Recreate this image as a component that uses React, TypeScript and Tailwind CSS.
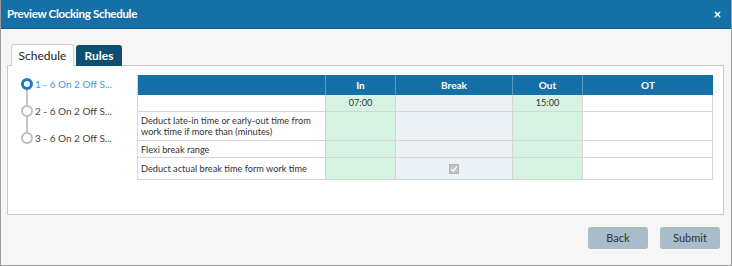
import { X } from 'lucide-react'

const FONT = "font-['Lato','Liberation_Sans',sans-serif]"

const STEPS = ['1 - 6 On 2 Off S...', '2 - 6 On 2 Off S...', '3 - 6 On 2 Off S...']

function Steps() {
  return (
    <div className="w-[116px] shrink-0 pt-[12px]">
      {STEPS.map((s, i) => (
        <div key={s} className="flex">
          <div className="flex flex-col items-center w-[12px]">
            <div
              className={`w-[12px] h-[12px] rounded-full bg-white ${i === 0 ? 'border-[3px] border-[#1b7bc2]' : 'border-[2px] border-[#bdbdbd]'}`}
            />
            {i < STEPS.length - 1 && <div className="w-[2px] h-[15px] bg-[#c4c4c4]" />}
          </div>
          <span className={`ml-[2px] text-[10px] leading-[12px] ${i === 0 ? 'text-[#3c9be0]' : 'text-[#444]'}`}>{s}</span>
        </div>
      ))}
    </div>
  )
}

function Checked() {
  return (
    <span className="inline-flex w-[10px] h-[10px] bg-[#c4c4c4] border border-[#b3b3b3] items-center justify-center">
      <svg width="8" height="8" viewBox="0 0 8 8" fill="none" stroke="white" strokeWidth="1.2">
        <polyline points="1.5 4.2 3.2 6.2 6.8 1.5" />
      </svg>
    </span>
  )
}

const ROWS = [
  { label: '', inV: '07:00', outV: '15:00', h: 'h-[17px]' },
  { label: 'Deduct late-in time or early-out time from work time if more than (minutes)', h: 'h-[29px]' },
  { label: 'Flexi break range', h: 'h-[17px]' },
  { label: 'Deduct actual break time form work time', h: 'h-[22px]', check: true },
]

const COLS = 'grid grid-cols-[188px_70px_117px_70px_130px]'

function RulesTable() {
  return (
    <div className="self-start mt-[9px] w-[576px] text-[9.2px] text-[#333] border-l border-[#d6d6d6]">
      <div className={`${COLS} h-[20px] bg-[#1570a7] text-white font-bold text-[10px]`}>
        <div className="border-r border-[#5d9cc6]" />
        <div className="border-r border-[#5d9cc6] flex items-center justify-center">In</div>
        <div className="border-r border-[#5d9cc6] flex items-center justify-center">Break</div>
        <div className="border-r border-[#5d9cc6] flex items-center justify-center">Out</div>
        <div className="flex items-center justify-center">OT</div>
      </div>
      {ROWS.map((r, i) => (
        <div key={i} className={`${COLS} ${r.h}`}>
          <div className="bg-white border-r border-b border-[#d6d6d6] flex items-center pl-[3px] pr-[10px] leading-[11px]">{r.label}</div>
          <div className="bg-[#d6f2e2] border-r border-b border-[#d6d6d6] flex items-center justify-center">{r.inV}</div>
          <div className="bg-[#ebf1f5] border-r border-b border-[#d6d6d6] flex items-center justify-center">{r.check && <Checked />}</div>
          <div className="bg-[#d6f2e2] border-r border-b border-[#d6d6d6] flex items-center justify-center">{r.outV}</div>
          <div className="bg-white border-r border-b border-[#d6d6d6]" />
        </div>
      ))}
    </div>
  )
}

export default function App() {
  return (
    <div className={`${FONT} w-[732px] h-[266px] bg-[#f6f6f6] border border-t-0 border-[#9c9c9c] flex flex-col`}>
      <div className="h-[29px] shrink-0 bg-[#1570a7] border-b border-[#0f5c8b] flex items-center justify-between pl-[6px] pr-[9px] text-white">
        <span className="text-[11.5px] font-bold tracking-[-0.3px]">Preview Clocking Schedule</span>
        <X size={9} strokeWidth={4} />
      </div>

      <div className="px-[6px] pt-[15px]">
        <div className="flex gap-[2px] pl-[4px] items-end relative z-10 -mb-px">
          <div className="w-[63px] h-[22px] bg-white border border-b-0 border-[#cfcfcf] rounded-t-[3px] flex items-center justify-center text-[12px] text-[#222]">
            Schedule
          </div>
          <div className="w-[46px] h-[21px] bg-[#0e4f70] rounded-t-[3px] flex items-center justify-center text-[12px] font-bold text-white">
            Rules
          </div>
        </div>
        <div className="h-[150px] bg-white border border-[#cacaca] flex pl-[13px] w-[717px]">
          <Steps />
          <RulesTable />
        </div>
      </div>

      <div className="flex justify-end gap-[12px] pr-[11px] mt-[12px]">
        <button className="w-[60px] h-[22px] rounded-[3px] bg-[#a8bcc9] text-[11px] text-[#333]">Back</button>
        <button className="w-[60px] h-[22px] rounded-[3px] bg-[#a8bcc9] text-[11px] text-[#333]">Submit</button>
      </div>
    </div>
  )
}
